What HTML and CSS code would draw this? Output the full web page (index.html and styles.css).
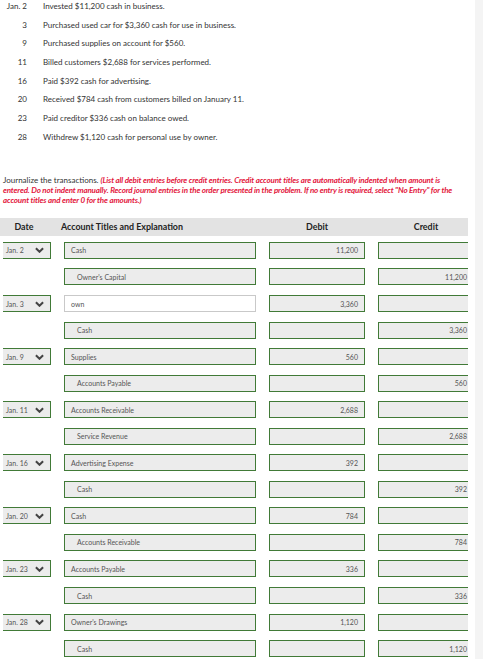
FILE: index.html
```html
<!DOCTYPE html>
<html>
<head>
<meta charset="utf-8">
<link rel="stylesheet" href="styles.css">
</head>
<body>
<div class="page">
  <main class="main">
    <ul class="transactions">
      <li><span class="tdate">Jan. 2</span><span>Invested $11,200 cash in business.</span></li>
      <li><span class="tdate">3</span><span>Purchased used car for $3,360 cash for use in business.</span></li>
      <li><span class="tdate">9</span><span>Purchased supplies on account for $560.</span></li>
      <li><span class="tdate">11</span><span>Billed customers $2,688 for services performed.</span></li>
      <li><span class="tdate">16</span><span>Paid $392 cash for advertising.</span></li>
      <li><span class="tdate">20</span><span>Received $784 cash from customers billed on January 11.</span></li>
      <li><span class="tdate">23</span><span>Paid creditor $336 cash on balance owed.</span></li>
      <li><span class="tdate">28</span><span>Withdrew $1,120 cash for personal use by owner.</span></li>
    </ul>

    <p class="instructions">Journalize the transactions. <em class="note">(List all debit entries before credit entries. Credit account titles are automatically indented when amount is entered. Do not indent manually. Record journal entries in the order presented in the problem. If no entry is required, select "No Entry" for the account titles and enter 0 for the amounts.)</em></p>

    <div class="journal">
      <div class="jhead">
        <div class="h-date">Date</div>
        <div class="h-acct">Account Titles and Explanation</div>
        <div class="h-num">Debit</div>
        <div class="h-num">Credit</div>
      </div>
      <div class="jrows">
        <div class="box date">Jan. 2<svg class="chev" viewBox="0 0 10 6"><polyline points="1,1 5,5 9,1"/></svg></div>
        <div class="box acct">Cash</div>
        <div class="box num">11,200</div>
        <div class="box num"></div>

        <div></div>
        <div class="box acct indent">Owner's Capital</div>
        <div class="box num"></div>
        <div class="box num">11,200</div>

        <div class="box date">Jan. 3<svg class="chev" viewBox="0 0 10 6"><polyline points="1,1 5,5 9,1"/></svg></div>
        <div class="box acct plain">own</div>
        <div class="box num">3,360</div>
        <div class="box num"></div>

        <div></div>
        <div class="box acct indent">Cash</div>
        <div class="box num"></div>
        <div class="box num">3,360</div>

        <div class="box date">Jan. 9<svg class="chev" viewBox="0 0 10 6"><polyline points="1,1 5,5 9,1"/></svg></div>
        <div class="box acct">Supplies</div>
        <div class="box num">560</div>
        <div class="box num"></div>

        <div></div>
        <div class="box acct indent">Accounts Payable</div>
        <div class="box num"></div>
        <div class="box num">560</div>

        <div class="box date">Jan. 11<svg class="chev" viewBox="0 0 10 6"><polyline points="1,1 5,5 9,1"/></svg></div>
        <div class="box acct">Accounts Receivable</div>
        <div class="box num">2,688</div>
        <div class="box num"></div>

        <div></div>
        <div class="box acct indent">Service Revenue</div>
        <div class="box num"></div>
        <div class="box num">2,688</div>

        <div class="box date">Jan. 16<svg class="chev" viewBox="0 0 10 6"><polyline points="1,1 5,5 9,1"/></svg></div>
        <div class="box acct">Advertising Expense</div>
        <div class="box num">392</div>
        <div class="box num"></div>

        <div></div>
        <div class="box acct indent">Cash</div>
        <div class="box num"></div>
        <div class="box num">392</div>

        <div class="box date">Jan. 20<svg class="chev" viewBox="0 0 10 6"><polyline points="1,1 5,5 9,1"/></svg></div>
        <div class="box acct">Cash</div>
        <div class="box num">784</div>
        <div class="box num"></div>

        <div></div>
        <div class="box acct indent">Accounts Receivable</div>
        <div class="box num"></div>
        <div class="box num">784</div>

        <div class="box date">Jan. 23<svg class="chev" viewBox="0 0 10 6"><polyline points="1,1 5,5 9,1"/></svg></div>
        <div class="box acct">Accounts Payable</div>
        <div class="box num">336</div>
        <div class="box num"></div>

        <div></div>
        <div class="box acct indent">Cash</div>
        <div class="box num"></div>
        <div class="box num">336</div>

        <div class="box date">Jan. 28<svg class="chev" viewBox="0 0 10 6"><polyline points="1,1 5,5 9,1"/></svg></div>
        <div class="box acct">Owner's Drawings</div>
        <div class="box num">1,120</div>
        <div class="box num"></div>

        <div></div>
        <div class="box acct indent">Cash</div>
        <div class="box num"></div>
        <div class="box num">1,120</div>
      </div>
    </div>
  </main>
  <div class="gutter"></div>
  <aside class="strip"></aside>
</div>
</body>
</html>
```

FILE: styles.css
```css
html, body {
  margin: 0;
  padding: 0;
  background: #fff;
}
body {
  font-family: Lato, "Open Sans", sans-serif;
  color: #333;
}
.page {
  display: flex;
  min-height: 659px;
}
.main {
  width: 468px;
  flex: none;
  overflow: hidden;
}
.gutter {
  width: 7px;
  flex: none;
}
.strip {
  flex: 1;
  background: #f4f4f4;
}

/* transactions list */
.transactions {
  list-style: none;
  margin: 0;
  padding: 1px 0 0 0;
  display: flex;
  flex-direction: column;
  gap: 8.7px;
  font-size: 8px;
}
.transactions li {
  display: grid;
  grid-template-columns: 27px 1fr;
  column-gap: 16px;
  height: 10px;
  line-height: 10px;
}
.tdate {
  text-align: right;
}

/* instructions */
.instructions {
  margin: 33px 0 0 3px;
  width: 458px;
  font-size: 8px;
  line-height: 10.2px;
}
.note {
  color: #e3173d;
  font-weight: 700;
  letter-spacing: -0.15px;
}

/* journal */
.journal {
  margin-top: 12.5px;
}
.jhead {
  display: grid;
  grid-template-columns: 48px 192px 96px 96px;
  column-gap: 13px;
  padding-left: 3px;
  height: 18px;
  align-items: center;
  background: #e3e3e3;
  font-size: 8.9px;
  font-weight: 700;
  color: #222;
}
.h-date {
  text-align: center;
  padding-right: 6px;
}
.h-acct {
  margin-left: -3px;
}
.h-num {
  text-align: center;
}
.jrows {
  display: grid;
  grid-template-columns: 48px 192px 96px 96px;
  grid-auto-rows: 17px;
  column-gap: 13px;
  row-gap: 9.55px;
  padding-left: 3px;
  margin-top: 6px;
}
.box {
  box-sizing: border-box;
  height: 17px;
  border: 1px solid #417a37;
  background: #ececec;
  font-size: 7px;
  color: #555;
  display: flex;
  align-items: center;
  white-space: nowrap;
}
.date {
  border-left: 0;
  padding-left: 3px;
  justify-content: space-between;
  padding-right: 6px;
}
.chev {
  width: 9px;
  height: 6px;
  flex: none;
  fill: none;
  stroke: #444;
  stroke-width: 2.2;
}
.acct {
  padding-left: 6px;
}
.acct.indent {
  padding-left: 12px;
}
.acct.plain {
  background: #fff;
  border-color: #c9c9c9;
}
.num {
  justify-content: flex-end;
  padding-right: 6px;
}
```
